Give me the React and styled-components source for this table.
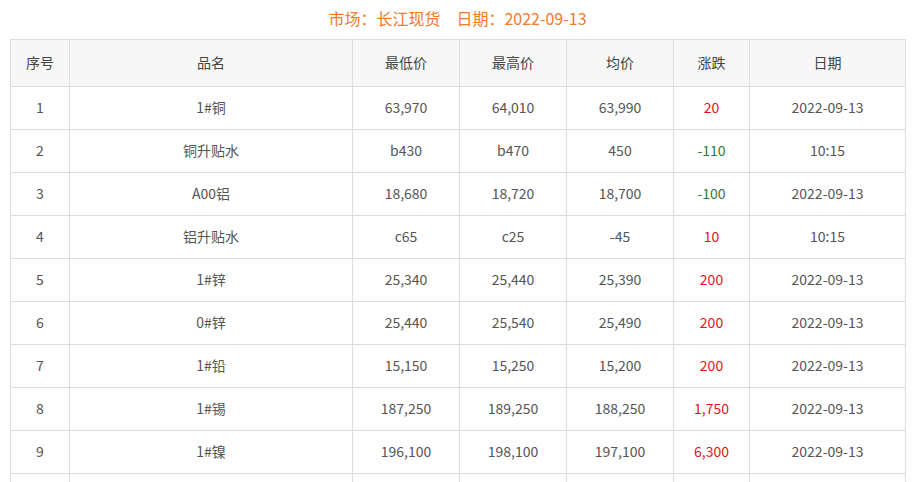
import styled, { createGlobalStyle } from "styled-components";

const GlobalStyle = createGlobalStyle`
  body {
    margin: 0;
    background: #fff;
    font-family: "Noto Sans CJK SC", "Noto Sans", sans-serif;
    color: #555;
  }
`;

const rows = [
  ["1", "1#铜", "63,970", "64,010", "63,990", "20", "2022-09-13"],
  ["2", "铜升贴水", "b430", "b470", "450", "-110", "10:15"],
  ["3", "A00铝", "18,680", "18,720", "18,700", "-100", "2022-09-13"],
  ["4", "铝升贴水", "c65", "c25", "-45", "10", "10:15"],
  ["5", "1#锌", "25,340", "25,440", "25,390", "200", "2022-09-13"],
  ["6", "0#锌", "25,440", "25,540", "25,490", "200", "2022-09-13"],
  ["7", "1#铅", "15,150", "15,250", "15,200", "200", "2022-09-13"],
  ["8", "1#锡", "187,250", "189,250", "188,250", "1,750", "2022-09-13"],
  ["9", "1#镍", "196,100", "198,100", "197,100", "6,300", "2022-09-13"],
  ["10", "", "", "", "", "", ""],
];

const widths = [59, 283, 107, 107, 107, 76, 156];
const heads = ["序号", "品名", "最低价", "最高价", "均价", "涨跌", "日期"];

const Page = styled.div`
  padding: 0 13px 0 10px;
`;

const Title = styled.h2`
  margin: 0;
  height: 39px;
  line-height: 37px;
  text-align: center;
  font-size: 16px;
  font-weight: normal;
  color: #f07b2a;
`;

const Table = styled.table`
  width: 896px;
  border-collapse: collapse;
  table-layout: fixed;
  font-size: 14px;
`;

const Th = styled.th`
  height: 44px;
  padding: 0 0 2px;
  border: 1px solid #ddd;
  background: #f7f7f7;
  font-weight: normal;
  color: #444;
`;

const Td = styled.td`
  height: 40px;
  padding: 0 0 2px;
  border: 1px solid #ddd;
  text-align: center;
  color: ${(p) => p.$tone || "#555"};
`;

const toneOf = (v) => {
  if (v.startsWith("-")) return "#2b7d3a";
  if (v === "0") return "#555";
  return "#e3131b";
};

export default function App() {
  return (
    <Page>
      <GlobalStyle />
      <Title>市场：长江现货　日期：2022-09-13</Title>
      <Table>
        <colgroup>
          {widths.map((w, i) => (
            <col key={i} style={{ width: w }} />
          ))}
        </colgroup>
        <thead>
          <tr>
            {heads.map((h) => (
              <Th key={h}>{h}</Th>
            ))}
          </tr>
        </thead>
        <tbody>
          {rows.map((r) => (
            <tr key={r[0]}>
              {r.map((c, i) => (
                <Td key={i} $tone={i === 5 ? toneOf(c) : undefined}>
                  {r[1] ? c : ""}
                </Td>
              ))}
            </tr>
          ))}
        </tbody>
      </Table>
    </Page>
  );
}
